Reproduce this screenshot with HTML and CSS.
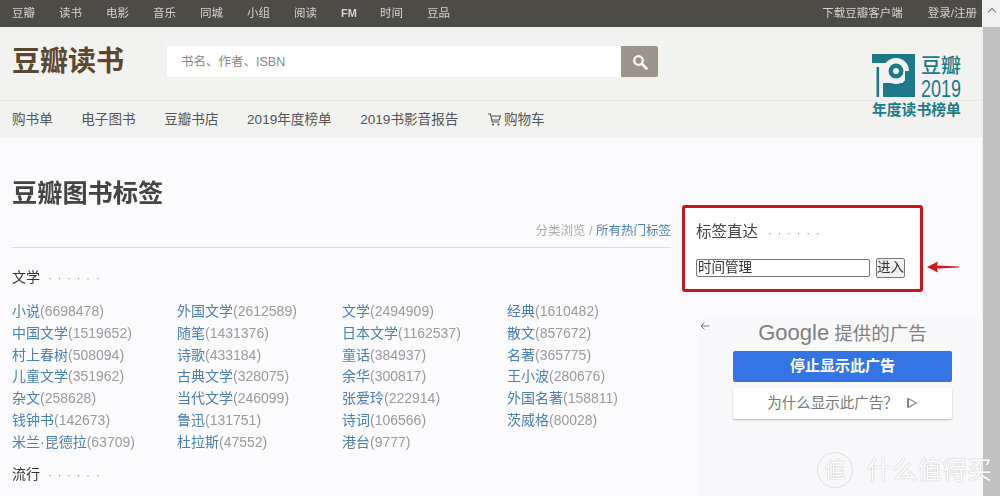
FILE: index.html
```html
<!DOCTYPE html>
<html lang="en">
<head>
  <meta charset="UTF-8">
  <title>豆瓣图书标签</title>
  <link rel="stylesheet" href="styles.css">
</head>
<body>

<div class="window">
  <div class="page">
    <!-- Top bar -->
    <div class="global-nav">
      <div class="global-links">
        <a>豆瓣</a><a>读书</a><a>电影</a><a>音乐</a><a>同城</a><a>小组</a><a>阅读</a><a class="fm">FM</a><a>时间</a><a>豆品</a>
      </div>
      <div class="global-user">
        <a>下载豆瓣客户端</a><a>登录/注册</a>
      </div>
    </div>

    <!-- Header -->
    <div class="header">
      <div class="header-top">
        <div class="site-logo">豆瓣读书</div>
        <div class="search">
          <div class="search-input">书名、作者、ISBN</div>
          <div class="search-btn">
            <svg width="16" height="16" viewBox="0 0 16 16"><circle cx="6.5" cy="6.5" r="4.3" fill="none" stroke="#fff" stroke-width="2.2"/><path d="M10 10l4.5 4.5" stroke="#fff" stroke-width="2.6" stroke-linecap="round"/></svg>
          </div>
        </div>
      </div>
      <div class="sub-nav">
        <a>购书单</a><a>电子图书</a><a>豆瓣书店</a><a>2019年度榜单</a><a>2019书影音报告</a>
        <a class="cart">
          <svg width="15" height="15" viewBox="0 0 15 15"><path d="M1 2h2.4l1.8 8h7M4 4h9.5l-1.4 4H5" fill="none" stroke="#555" stroke-width="1.1"/><circle cx="6" cy="12.6" r="1.1" fill="#555"/><circle cx="11.4" cy="12.6" r="1.1" fill="#555"/></svg>购物车</a>
      </div>

      <div class="annual-logo">
        <div class="annual-top">
          <svg width="44" height="44" viewBox="0 0 44 44">
            <rect width="43" height="9" fill="#1c7a88"/>
            <rect x="31" width="12" height="43" fill="#1c7a88"/>
            <rect x="11" y="29" width="21" height="14" fill="#1c7a88"/>
            <circle cx="24" cy="17" r="13" fill="#f2f2f1"/>
            <rect x="33" y="17" width="10" height="26" fill="#1c7a88"/>
            <circle cx="24" cy="17" r="7.5" fill="#1c7a88"/>
            <circle cx="24" cy="17" r="3" fill="#f2f2f1"/>
            <rect x="4.5" y="13" width="2.6" height="30" fill="#1c7a88"/>
          </svg>
          <div class="annual-text">
            <div class="annual-name">豆瓣</div>
            <div class="annual-year">2019</div>
          </div>
        </div>
        <div class="annual-sub">年度读书榜单</div>
      </div>
    </div>

    <!-- Content -->
    <div class="content">
      <div class="article">
        <h1>豆瓣图书标签</h1>
        <div class="crumbs">分类浏览 / <a>所有热门标签</a></div>
        <h2 class="section-title">文学<span class="dots">· · · · · ·</span></h2>
        <div class="tag-grid">
          <div><a>小说</a>(6698478)</div>
          <div><a>外国文学</a>(2612589)</div>
          <div><a>文学</a>(2494909)</div>
          <div><a>经典</a>(1610482)</div>
          <div><a>中国文学</a>(1519652)</div>
          <div><a>随笔</a>(1431376)</div>
          <div><a>日本文学</a>(1162537)</div>
          <div><a>散文</a>(857672)</div>
          <div><a>村上春树</a>(508094)</div>
          <div><a>诗歌</a>(433184)</div>
          <div><a>童话</a>(384937)</div>
          <div><a>名著</a>(365775)</div>
          <div><a>儿童文学</a>(351962)</div>
          <div><a>古典文学</a>(328075)</div>
          <div><a>余华</a>(300817)</div>
          <div><a>王小波</a>(280676)</div>
          <div><a>杂文</a>(258628)</div>
          <div><a>当代文学</a>(246099)</div>
          <div><a>张爱玲</a>(222914)</div>
          <div><a>外国名著</a>(158811)</div>
          <div><a>钱钟书</a>(142673)</div>
          <div><a>鲁迅</a>(131751)</div>
          <div><a>诗词</a>(106566)</div>
          <div><a>茨威格</a>(80028)</div>
          <div><a>米兰·昆德拉</a>(63709)</div>
          <div><a>杜拉斯</a>(47552)</div>
          <div><a>港台</a>(9777)</div>
        </div>
        <h2 class="section-title next">流行<span class="dots">· · · · · ·</span></h2>
      </div>

      <div class="aside">
        <div class="tag-search">
          <div class="tag-search-title">标签直达<span class="dots">· · · · · ·</span></div>
          <div class="tag-search-row">
            <div class="tag-input">时间管理</div>
            <div class="tag-btn">进入</div>
          </div>
        </div>

        <div class="ad">
          <svg class="ad-back" width="10" height="10" viewBox="0 0 10 10"><path d="M9.5 5H1M4.5 1.5L1 5l3.5 3.5" fill="none" stroke="#777" stroke-width="1"/></svg>
          <div class="ad-title"><span class="google">Google</span> 提供的广告</div>
          <div class="ad-stop">停止显示此广告</div>
          <div class="ad-why">为什么显示此广告？
            <svg width="12" height="12" viewBox="0 0 12 12"><path d="M2 1.5v9L10.5 6z" fill="none" stroke="#888" stroke-width="1.2"/><path d="M2 1.5v9" stroke="#888" stroke-width="2"/></svg>
          </div>
        </div>
      </div>
    </div>
  </div>

  <div class="scrollbar">
    <div class="scroll-up"></div>
    <div class="scroll-thumb"></div>
  </div>

  <!-- annotation and watermark drawn over the screenshot -->
  <svg class="red-arrow" width="32" height="12" viewBox="0 0 32 12"><path d="M0 6L11 0.5 10 4.5 32 5.4V6.6L10 7.5 11 11.5z" fill="#d2171d"/></svg>
  <div class="watermark">
    <span class="watermark-mark">值</span>
    <span class="watermark-text">什么值得买</span>
  </div>
</div>

</body>
</html>
```

FILE: styles.css
```css
* {
  box-sizing: border-box;
}

body {
  margin: 0;
  font-family: "Liberation Sans", "Noto Sans CJK SC", sans-serif;
  color: #333;
  background: #fbfbfd;
}

/* the reference is a soft, re-compressed photo of a page */
.window {
  position: relative;
  display: flex;
  width: 1000px;
  height: 496px;
  overflow: hidden;
  filter: blur(0.45px);
}

.page {
  flex: 1;
  min-width: 0;
}

/* top bar */
.global-nav {
  display: flex;
  justify-content: space-between;
  height: 27px;
  padding: 0 5px 0 12px;
  background: #4d4b46;
  color: #d5d3cf;
  font-size: 11.5px;
  line-height: 26px;
}

.global-links a {
  margin-right: 24px;
}

.global-links .fm {
  margin-right: 23px;
  font-weight: bold;
  font-size: 11px;
}

.global-user a {
  margin-left: 25px;
}

/* header */
.header {
  position: relative;
  height: 111px;
  background: #f2f2f1;
}

.header-top {
  display: flex;
  align-items: flex-start;
  height: 74px;
  padding: 19px 0 0 12px;
  border-bottom: 1px solid #e8e8e6;
}

.site-logo {
  width: 155px;
  margin-top: -1px;
  color: #5b4630;
  font-size: 28px;
  font-weight: bold;
  line-height: 34px;
}

.search {
  display: flex;
  width: 491px;
  height: 31px;
}

.search-input {
  flex: 1;
  padding-left: 14px;
  background: #fff;
  color: #888;
  font-size: 12.5px;
  line-height: 32px;
}

.search-btn {
  display: flex;
  align-items: center;
  justify-content: center;
  width: 37px;
  background: #9b9488;
  border-radius: 0 2px 2px 0;
}

.sub-nav {
  display: flex;
  padding-left: 12px;
  color: #555;
  font-size: 13.6px;
  line-height: 37px;
}

.sub-nav a {
  margin-right: 28.5px;
}

.cart svg {
  vertical-align: -3px;
  margin-right: 2px;
}

.annual-logo {
  position: absolute;
  top: 27px;
  left: 872px;
  width: 90px;
  color: #1c7a88;
}

.annual-top {
  display: flex;
  gap: 4px;
  height: 46px;
}

.annual-text {
  width: 42px;
  text-align: center;
}

.annual-name {
  font-size: 20px;
  line-height: 24px;
  font-weight: 500;
}

.annual-year {
  margin-left: -5px;
  font-size: 24px;
  line-height: 22px;
  transform: scaleX(0.75);
  white-space: nowrap;
}

.annual-sub {
  font-size: 14.8px;
  font-weight: bold;
  line-height: 20px;
  white-space: nowrap;
}

/* content */
.content {
  display: flex;
}

.article {
  width: 671px;
  padding-left: 12px;
}

h1 {
  margin: 38px 0 0;
  color: #444;
  font-size: 25.2px;
  font-weight: bold;
  line-height: 34px;
}

.crumbs {
  margin-top: 12px;
  padding-bottom: 7px;
  border-bottom: 1px solid #ddd;
  color: #aaa;
  font-size: 12.5px;
  line-height: 18px;
  text-align: right;
}

.crumbs a {
  color: #4a7fb0;
}

.section-title {
  margin: 19px 0 0;
  color: #333;
  font-size: 14px;
  font-weight: normal;
  line-height: 20px;
}

.section-title.next {
  margin-top: 10px;
}

.dots {
  margin-left: 8px;
  color: #999;
  font-size: 12px;
  letter-spacing: 1.1px;
}

.tag-grid {
  display: grid;
  grid-template-columns: repeat(4, 165px);
  grid-auto-rows: 21.8px;
  margin-top: 13px;
  color: #9a9a9a;
  font-size: 14px;
  line-height: 21px;
  white-space: nowrap;
}

.tag-grid a {
  color: #4a7fb0;
}

/* right column */
.aside {
  margin-left: 11px;
}

.tag-search {
  width: 241px;
  height: 87px;
  margin-top: 67px;
  padding: 13px 11px 0;
  border: 3px solid #c8171e;
  border-radius: 3px;
  background: #fff;
}

.tag-search-title {
  color: #444;
  font-size: 15.5px;
  line-height: 22px;
}

.tag-search-title .dots {
  margin-left: 10px;
}

.tag-search-row {
  display: flex;
  align-items: center;
  margin-top: 14px;
}

.tag-input {
  width: 174px;
  height: 18px;
  padding-left: 1px;
  border: 1px solid #777;
  border-radius: 2px;
  color: #333;
  font-size: 13.5px;
  line-height: 15px;
}

.tag-btn {
  width: 29px;
  height: 20px;
  margin-left: 6px;
  border: 1px solid #777;
  border-radius: 2px;
  background: #f0f0f0;
  font-size: 13.5px;
  line-height: 18px;
  text-align: center;
  white-space: nowrap;
}

.ad {
  position: relative;
  width: 285px;
  height: 178px;
  margin: 26px 0 0 16px;
  padding: 3px 0 0 35px;
  background: #f8f8fa;
}

.ad-back {
  position: absolute;
  top: 3px;
  left: 2px;
}

.ad-title {
  width: 219px;
  color: #808080;
  font-size: 18.5px;
  line-height: 24px;
  text-align: center;
  white-space: nowrap;
}

.google {
  font-size: 22px;
}

.ad-stop {
  width: 219px;
  height: 31px;
  margin-top: 5px;
  border-radius: 2px;
  background: #3574e3;
  color: #fff;
  font-size: 15px;
  font-weight: bold;
  line-height: 30px;
  text-align: center;
}

.ad-why {
  width: 219px;
  height: 31px;
  margin-top: 6px;
  border-radius: 2px;
  background: #fff;
  box-shadow: 0 1px 2px rgba(0, 0, 0, 0.25);
  color: #777;
  font-size: 14.5px;
  line-height: 31px;
  text-align: center;
}

.ad-why svg {
  vertical-align: -1px;
  margin-left: 4px;
}

/* scrollbar */
.scrollbar {
  width: 18px;
  padding-left: 1px;
  background: #f1f1f1;
}

.scroll-up {
  height: 18px;
}

.scroll-up::before {
  content: "";
  display: block;
  width: 5px;
  height: 5px;
  margin: 9px 0 0 6px;
  border-top: 1px solid #777;
  border-left: 1px solid #777;
  transform: rotate(45deg);
}

.scroll-thumb {
  height: 478px;
  background: #c1c1c1;
}

/* overlays */
.red-arrow {
  position: absolute;
  top: 261px;
  left: 927px;
}

.watermark {
  position: absolute;
  top: 452px;
  left: 817px;
  display: flex;
  align-items: center;
  gap: 14px;
  color: #fff;
  text-shadow: 0 0 1px #888;
}

.watermark-mark {
  width: 36px;
  height: 36px;
  border: 1px solid #ddd;
  border-radius: 50%;
  font-size: 21px;
  line-height: 33px;
  text-align: center;
}

.watermark-text {
  font-size: 25px;
  line-height: 36px;
  white-space: nowrap;
}
```
